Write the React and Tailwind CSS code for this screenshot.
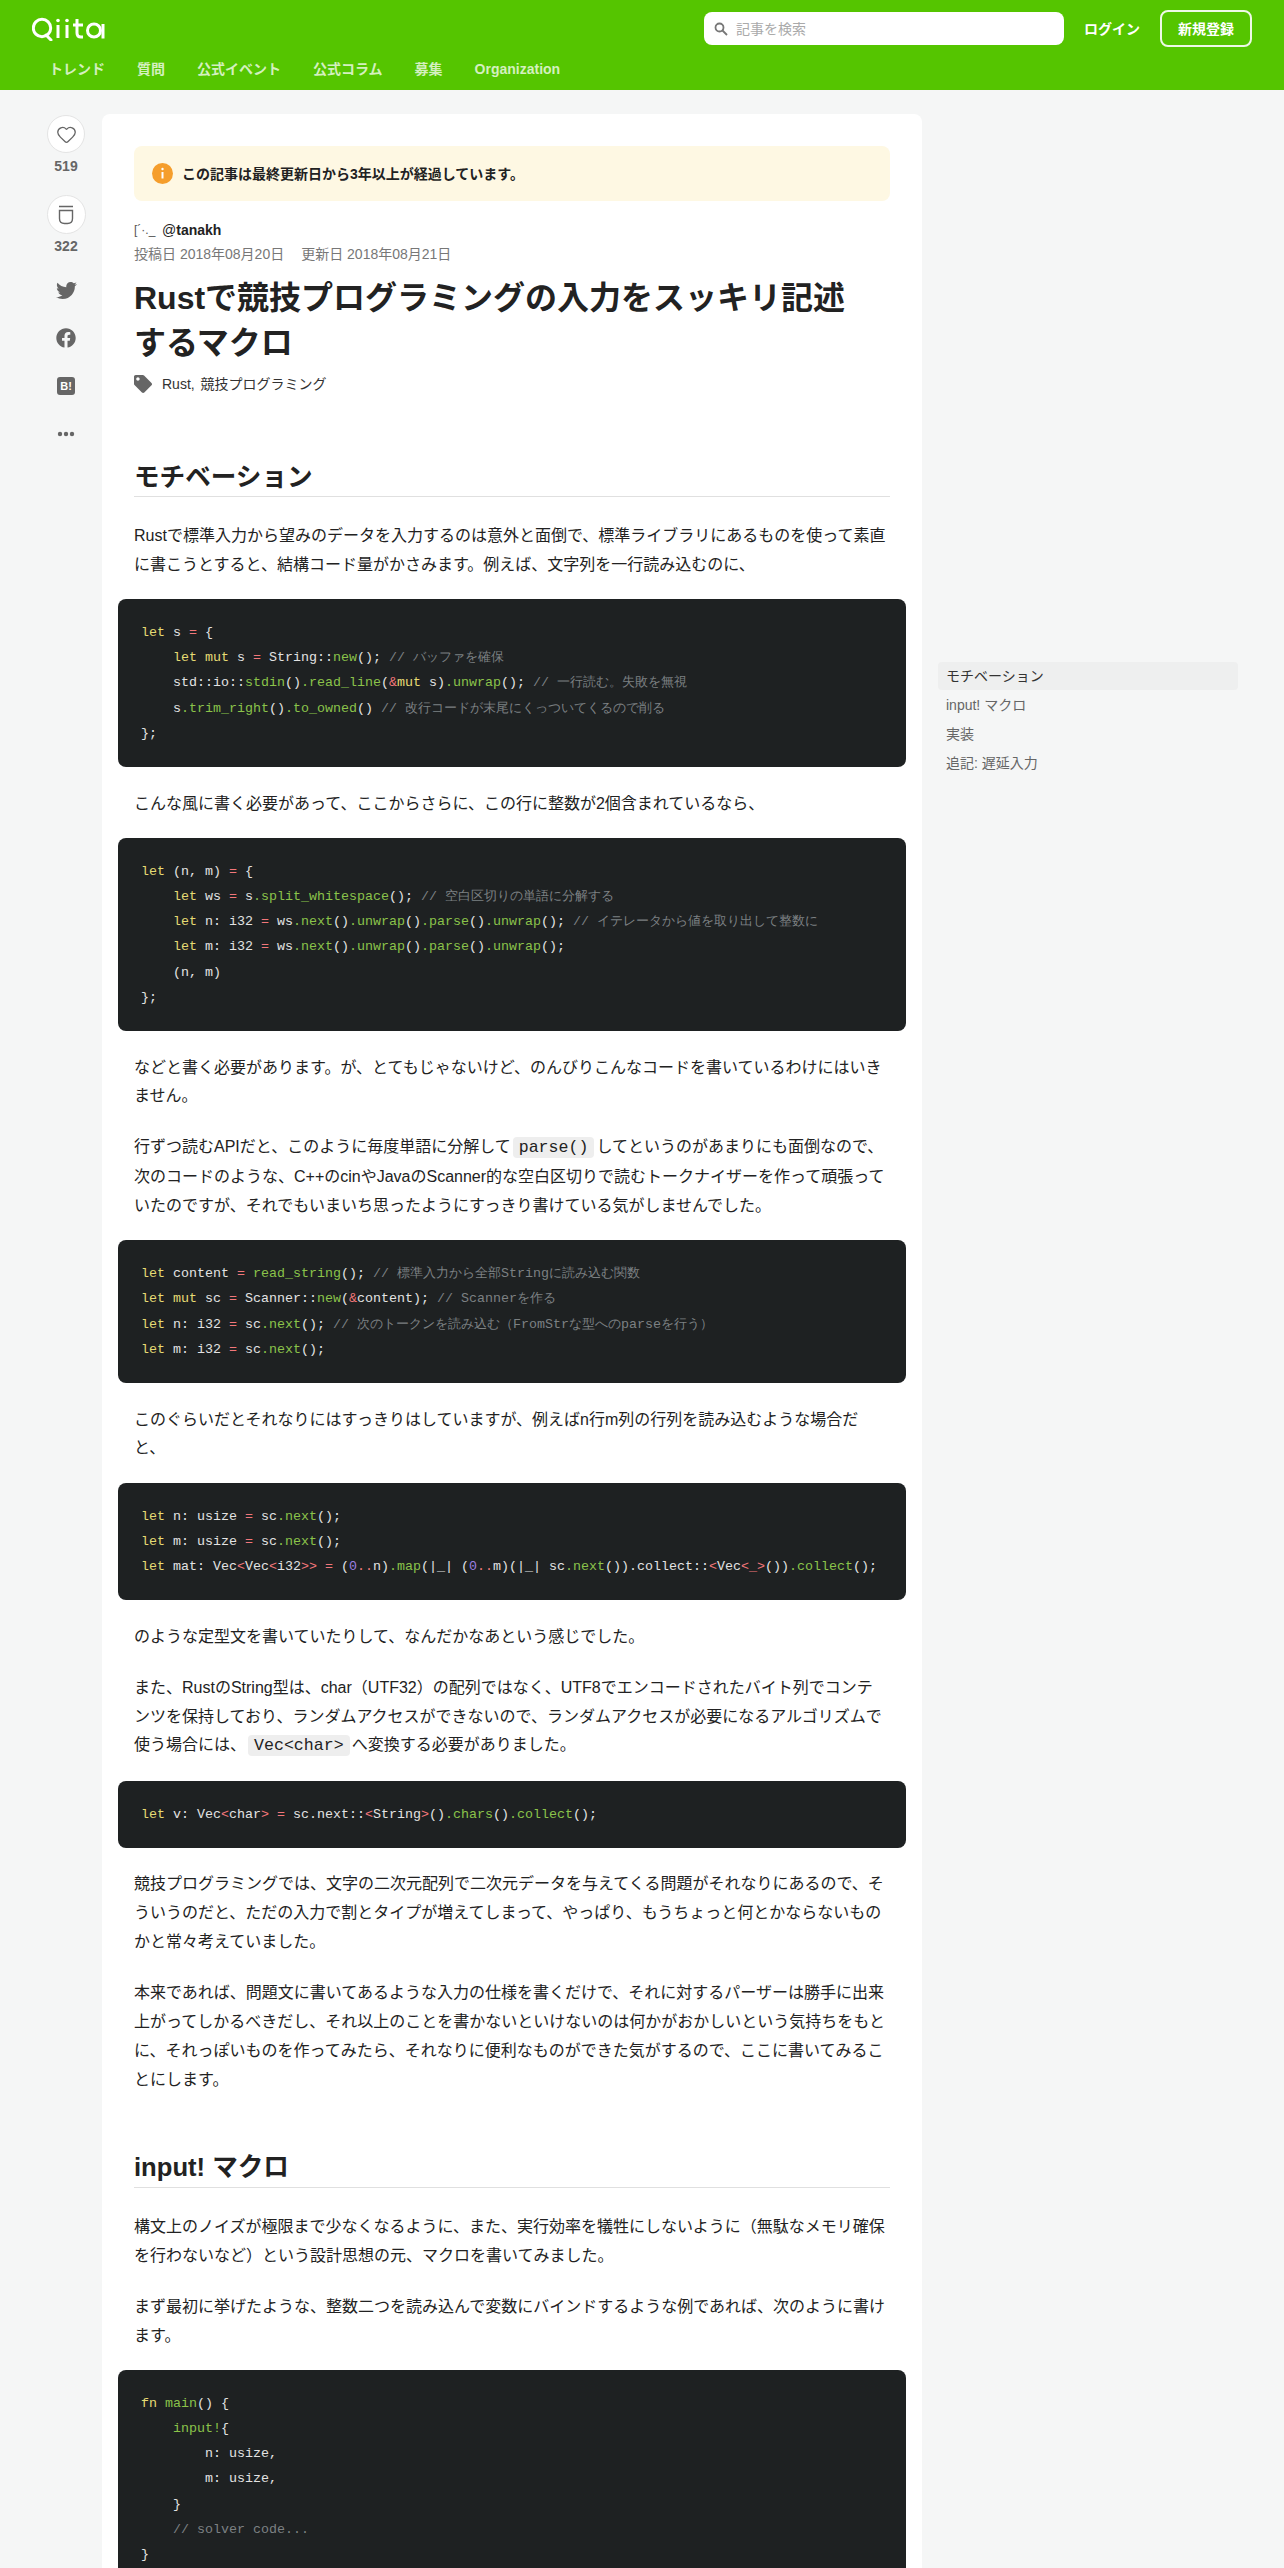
import { Heart } from "lucide-react";
import { FaTwitter, FaFacebook, FaTag } from "react-icons/fa";

const K = ({ children }) => <span className="text-[#e6db74]">{children}</span>;
const O = ({ children }) => <span className="text-[#f2777a]">{children}</span>;
const F = ({ children }) => <span className="text-[#8bc34a]">{children}</span>;
const C = ({ children }) => <span className="text-[#7c8082]">{children}</span>;
const N = ({ children }) => <span className="text-[#9d7fe0]">{children}</span>;

function Code({ children }) {
  return (
    <pre className="mx-[-16px] mb-[22.5px] mt-[-3px] rounded-lg bg-[#1e2122] px-[23px] py-[21px] font-['Liberation_Mono','Noto_Sans_CJK_JP',monospace] text-[13.33px] leading-[25.2px] text-[#e3e3e3]">
      <code>{children}</code>
    </pre>
  );
}

function P({ children }) {
  return <p className="mb-[22.4px] pr-[2px] text-base leading-[28.8px] text-[#222]">{children}</p>;
}

function Inline({ children }) {
  return (
    <code className="mx-[2px] rounded bg-[#eeeeee] px-[6px] py-px font-['Liberation_Mono',monospace] text-[16.6px]">
      {children}
    </code>
  );
}

function H2({ children, className }) {
  return (
    <h2 className={`mb-[25px] border-b border-[#e0e0e0] pb-[1.5px] text-[25.6px] font-bold leading-[36px] text-[#222] ${className}`}>
      {children}
    </h2>
  );
}

function Header() {
  const nav = ["トレンド", "質問", "公式イベント", "公式コラム", "募集", "Organization"];
  return (
    <header className="h-[90px] bg-[#55c500]">
      <div className="flex h-[57px] items-center pl-8 pr-8">
        <svg width="76" height="24" viewBox="0 0 76 24" fill="none" stroke="#fff" strokeWidth="3">
          <circle cx="10" cy="11" r="8.7" />
          <path d="M14 18l5 5" strokeLinecap="round" />
          <path d="M26 8v13M35 8v13" />
          <circle cx="26" cy="3.5" r="1.8" fill="#fff" stroke="none" />
          <circle cx="35" cy="3.5" r="1.8" fill="#fff" stroke="none" />
          <path d="M45 2v14q0 4 4 4h2M41 8h10" />
          <circle cx="62" cy="13.5" r="6.5" />
          <path d="M71 7v14.5" />
        </svg>
        <div className="ml-auto flex h-[33px] w-[360px] items-center gap-2 rounded-lg bg-white pl-[10px]">
          <svg width="14" height="14" viewBox="0 0 14 14" fill="none" stroke="#777" strokeWidth="1.8">
            <circle cx="5.5" cy="5.5" r="4" />
            <path d="M8.5 8.5l4.5 4.5" />
          </svg>
          <span className="text-sm text-[#aaa]">記事を検索</span>
        </div>
        <span className="ml-5 text-sm font-bold text-white">ログイン</span>
        <span className="ml-5 flex h-[37px] w-[92px] items-center justify-center rounded-lg border-2 border-white/90 text-sm font-bold text-white">
          新規登録
        </span>
      </div>
      <nav className="flex gap-8 pl-[49px] text-sm font-bold leading-6 text-white/75">
        {nav.map((item) => (
          <span key={item}>{item}</span>
        ))}
      </nav>
    </header>
  );
}

function Actions() {
  return (
    <aside className="flex w-[102px] shrink-0 flex-col items-center pl-[30px] pt-px text-[#666]">
      <div className="flex size-[38px] items-center justify-center rounded-full border border-[#e4e4e4] bg-white">
        <Heart size={21} strokeWidth={1.5} />
      </div>
      <span className="mt-[3px] text-sm font-bold leading-[20px]">519</span>
      <div className="mt-[19px] flex size-[39px] items-center justify-center rounded-full border border-[#e4e4e4] bg-white">
        <svg width="18" height="20" viewBox="0 0 18 20" fill="none" stroke="#666" strokeWidth="1.4">
          <path d="M2 1.5h14M2.5 5.5h13v8q0 5-5 5h-3q-5 0-5-5z" />
        </svg>
      </div>
      <span className="mt-[2px] text-sm font-bold leading-[20px]">322</span>
      <FaTwitter size={21} className="mt-[24px]" />
      <FaFacebook size={20} className="mt-[27px]" />
      <span className="mt-[29px] flex size-[18px] items-center justify-center rounded-[3px] bg-[#666] text-[11px] font-bold text-white">
        B!
      </span>
      <svg width="18" height="6" viewBox="0 0 18 6" fill="#666" className="mt-[36px]">
        <circle cx="3" cy="3" r="2.2" />
        <circle cx="9" cy="3" r="2.2" />
        <circle cx="15" cy="3" r="2.2" />
      </svg>
    </aside>
  );
}

function Toc() {
  return (
    <aside className="ml-4 mt-[548px] w-[300px] text-sm text-[#666]">
      <div className="flex h-7 items-center rounded bg-[#eeefef] px-2 text-[#333]">モチベーション</div>
      <div className="flex h-[29px] items-center px-2">input! マクロ</div>
      <div className="flex h-[29px] items-center px-2">実装</div>
      <div className="flex h-[29px] items-center px-2">追記: 遅延入力</div>
    </aside>
  );
}

function Article() {
  return (
    <main className="w-[820px] shrink-0 rounded-t-lg bg-white px-8 pt-8">
      <div className="mb-[18px] flex h-[55px] items-center gap-[9px] rounded-lg bg-[#fef8e3] pl-[18px] text-sm font-bold text-[#222]">
        <svg width="21" height="21" viewBox="0 0 21 21">
          <circle cx="10.5" cy="10.5" r="10.5" fill="#f59e2c" />
          <path d="M10.5 9v6.5" stroke="#fff" strokeWidth="2" />
          <circle cx="10.5" cy="6" r="1.2" fill="#fff" />
        </svg>
        この記事は最終更新日から3年以上が経過しています。
      </div>

      <div className="flex h-[22px] items-center text-sm text-[#222]">
        <span className="w-7 text-xs text-[#555]">[´·._</span>
        <span>
          @<b>tanakh</b>
        </span>
      </div>
      <div className="mt-[3px] flex gap-[17px] text-sm leading-5 text-[#777]">
        <span>投稿日 2018年08月20日</span>
        <span>更新日 2018年08月21日</span>
      </div>
      <h1 className="mt-3 text-[32px] font-bold leading-[44.8px] text-[#222]">
        Rustで競技プログラミングの入力をスッキリ記述
        <br />
        するマクロ
      </h1>
      <div className="mt-[6px] flex items-center gap-[10px] text-sm leading-6 text-[#333]">
        <FaTag size={18} className="text-[#666]" />
        <span>
          <span className="mr-[2px]">Rust,</span> 競技プログラミング
        </span>
      </div>

      <H2 className="mt-[63px]">モチベーション</H2>
      <P>
        Rustで標準入力から望みのデータを入力するのは意外と面倒で、標準ライブラリにあるものを使って素直に書こうとすると、結構コード量がかさみます。例えば、文字列を一行読み込むのに、
      </P>
      <Code>
        <K>let</K> s <O>=</O> {"{"}
        {"\n    "}
        <K>let mut</K> s <O>=</O> String::<F>new</F>(); <C>// バッファを確保</C>
        {"\n    "}std::io::<F>stdin</F>()<F>.read_line</F>(<O>&</O><K>mut</K> s)<F>.unwrap</F>(); <C>// 一行読む。失敗を無視</C>
        {"\n    "}s<F>.trim_right</F>()<F>.to_owned</F>() <C>// 改行コードが末尾にくっついてくるので削る</C>
        {"\n};"}
      </Code>
      <P>こんな風に書く必要があって、ここからさらに、この行に整数が2個含まれているなら、</P>
      <Code>
        <K>let</K> (n, m) <O>=</O> {"{"}
        {"\n    "}
        <K>let</K> ws <O>=</O> s<F>.split_whitespace</F>(); <C>// 空白区切りの単語に分解する</C>
        {"\n    "}
        <K>let</K> n: i32 <O>=</O> ws<F>.next</F>()<F>.unwrap</F>()<F>.parse</F>()<F>.unwrap</F>(); <C>// イテレータから値を取り出して整数に</C>
        {"\n    "}
        <K>let</K> m: i32 <O>=</O> ws<F>.next</F>()<F>.unwrap</F>()<F>.parse</F>()<F>.unwrap</F>();
        {"\n    (n, m)\n};"}
      </Code>
      <P>などと書く必要があります。が、とてもじゃないけど、のんびりこんなコードを書いているわけにはいきません。</P>
      <P>
        行ずつ読むAPIだと、このように毎度単語に分解して<Inline>parse()</Inline>
        してというのがあまりにも面倒なので、次のコードのような、C++のcinやJavaのScanner的な空白区切りで読むトークナイザーを作って頑張っていたのですが、それでもいまいち思ったようにすっきり書けている気がしませんでした。
      </P>
      <Code>
        <K>let</K> content <O>=</O> <F>read_string</F>(); <C>// 標準入力から全部Stringに読み込む関数</C>
        {"\n"}
        <K>let mut</K> sc <O>=</O> Scanner::<F>new</F>(<O>&</O>content); <C>// Scannerを作る</C>
        {"\n"}
        <K>let</K> n: i32 <O>=</O> sc<F>.next</F>(); <C>// 次のトークンを読み込む（FromStrな型へのparseを行う）</C>
        {"\n"}
        <K>let</K> m: i32 <O>=</O> sc<F>.next</F>();
      </Code>
      <P>このぐらいだとそれなりにはすっきりはしていますが、例えばn行m列の行列を読み込むような場合だと、</P>
      <Code>
        <K>let</K> n: usize <O>=</O> sc<F>.next</F>();
        {"\n"}
        <K>let</K> m: usize <O>=</O> sc<F>.next</F>();
        {"\n"}
        <K>let</K> mat: Vec<O>{"<"}</O>Vec<O>{"<"}</O>i32<O>{">>"}</O> <O>=</O> (<N>0</N><O>..</O>n)<F>.map</F>(|_| (<N>0</N><O>..</O>m)(|_| sc<F>.next</F>()).collect::<O>{"<"}</O>Vec<O>{"<_>"}</O>())<F>.collect</F>();
      </Code>
      <P>のような定型文を書いていたりして、なんだかなあという感じでした。</P>
      <P>
        また、RustのString型は、char（UTF32）の配列ではなく、UTF8でエンコードされたバイト列でコンテンツを保持しており、ランダムアクセスができないので、ランダムアクセスが必要になるアルゴリズムで使う場合には、
        <Inline>{"Vec<char>"}</Inline>へ変換する必要がありました。
      </P>
      <Code>
        <K>let</K> v: Vec<O>{"<"}</O>char<O>{">"}</O> <O>=</O> sc.next::<O>{"<"}</O>String<O>{">"}</O>()<F>.chars</F>()<F>.collect</F>();
      </Code>
      <P>
        競技プログラミングでは、文字の二次元配列で二次元データを与えてくる問題がそれなりにあるので、そういうのだと、ただの入力で割とタイプが増えてしまって、やっぱり、もうちょっと何とかならないものかと常々考えていました。
      </P>
      <P>
        本来であれば、問題文に書いてあるような入力の仕様を書くだけで、それに対するパーザーは勝手に出来上がってしかるべきだし、それ以上のことを書かないといけないのは何かがおかしいという気持ちをもとに、それっぽいものを作ってみたら、それなりに便利なものができた気がするので、ここに書いてみることにします。
      </P>

      <H2 className="mt-[55px]">input! マクロ</H2>
      <P>
        構文上のノイズが極限まで少なくなるように、また、実行効率を犠牲にしないように（無駄なメモリ確保を行わないなど）という設計思想の元、マクロを書いてみました。
      </P>
      <P>まず最初に挙げたような、整数二つを読み込んで変数にバインドするような例であれば、次のように書けます。</P>
      <Code>
        <K>fn</K> <F>main</F>() {"{"}
        {"\n    "}
        <F>input!</F>
        {"{"}
        {"\n        n: usize,\n        m: usize,\n    }\n    "}
        <C>// solver code...</C>
        {"\n}"}
      </Code>
    </main>
  );
}

export default function App() {
  return (
    <div className="h-[2568px] overflow-hidden bg-[#f5f6f6] font-['Liberation_Sans','Noto_Sans_CJK_JP',sans-serif]">
      <Header />
      <div className="flex pt-6">
        <Actions />
        <Article />
        <Toc />
      </div>
    </div>
  );
}
